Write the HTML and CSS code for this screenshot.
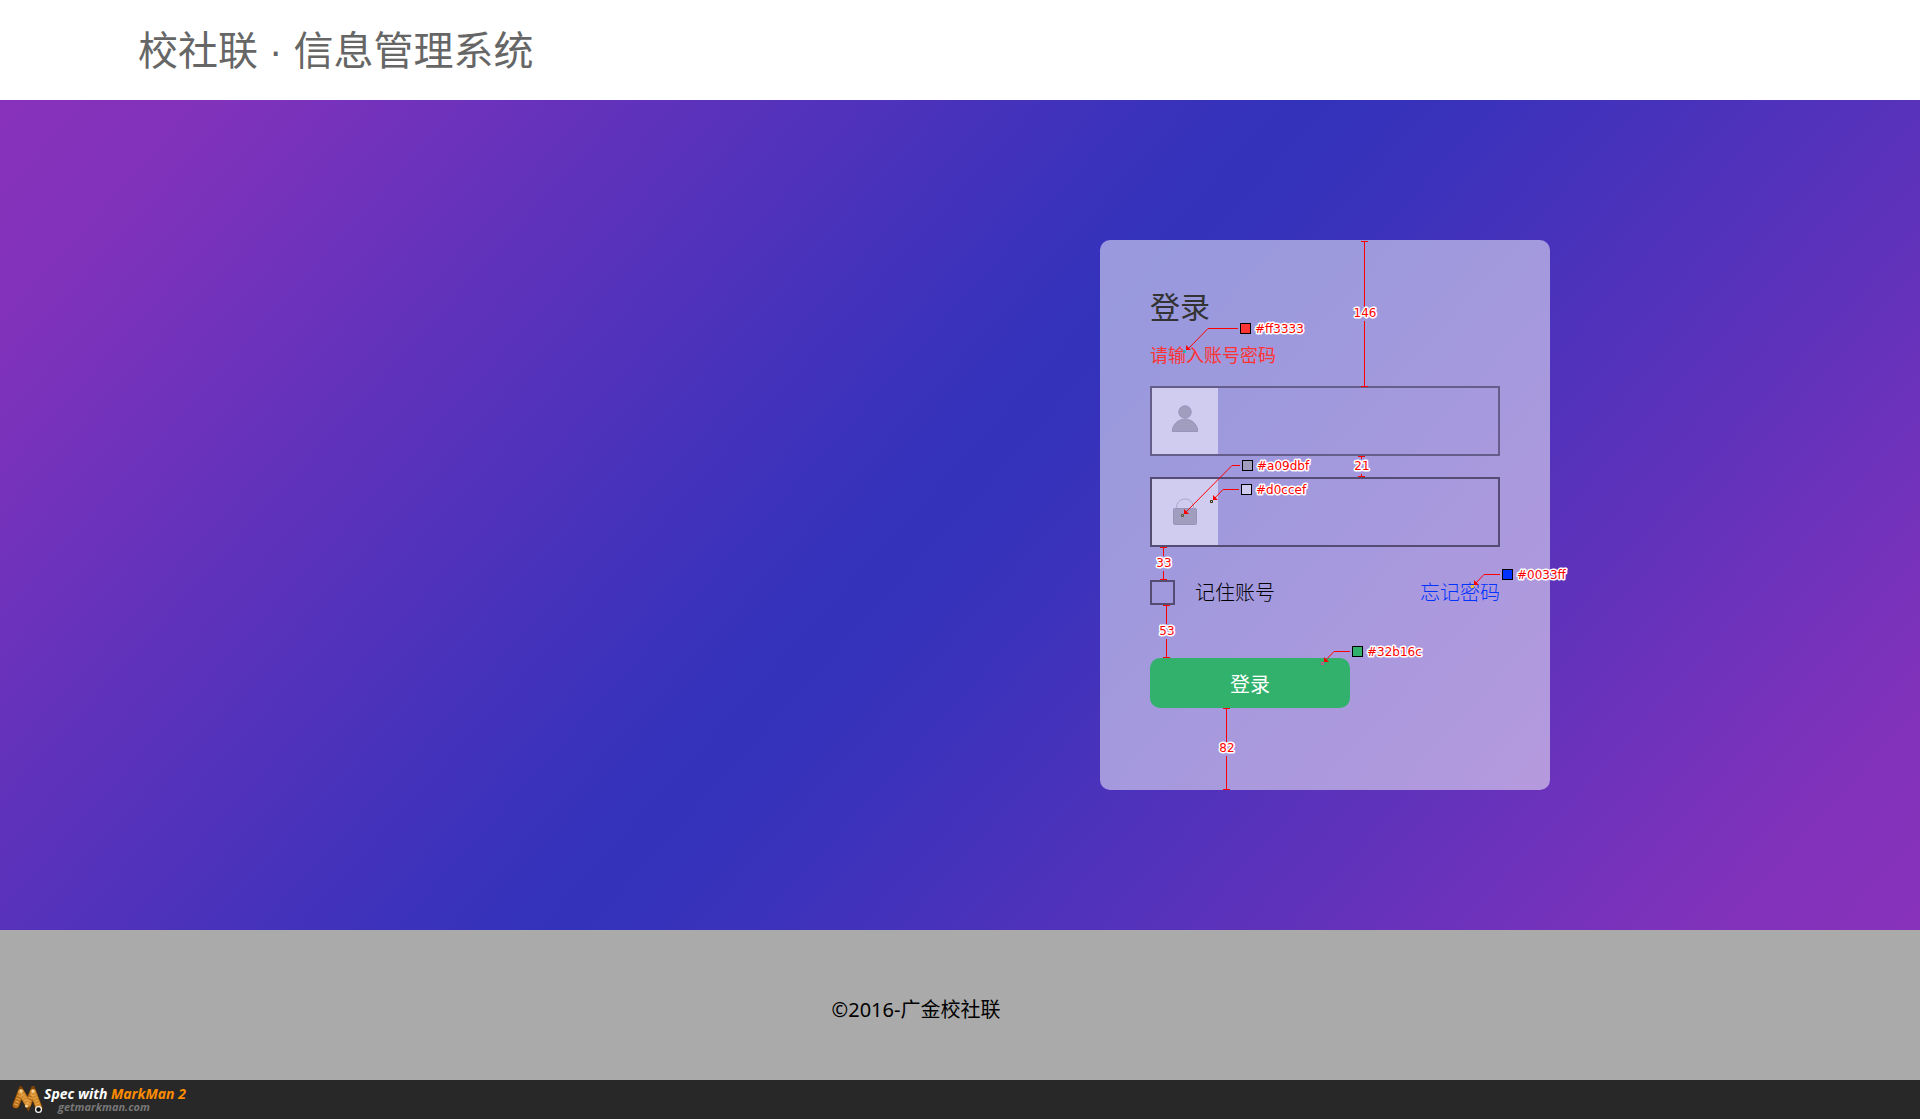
FILE: index.html
```html
<!DOCTYPE html>
<html lang="zh-CN">
<head>
<meta charset="utf-8">
<title>校社联 · 信息管理系统</title>
<link rel="stylesheet" href="styles.css">
</head>
<body>
<header class="header">
  <h1 class="header-title">校社联 · 信息管理系统</h1>
</header>

<main class="hero">
  <form class="card">
    <h2 class="card-title">登录</h2>
    <p class="card-error">请输入账号密码</p>

    <div class="field">
      <label class="field-icon" for="account" aria-label="账号">
        <svg width="28" height="28" viewBox="0 0 28 28" fill="#a09dbf" stroke="#9793ba">
          <circle cx="14" cy="7" r="6.2"/>
          <path d="M1.300 26.500C1.300 19.500 7 14.200 14 14.200S26.700 19.500 26.700 26.500Z"/>
        </svg>
      </label>
      <input class="field-input" id="account" type="text">
    </div>

    <div class="field field-dark">
      <label class="field-icon" for="password" aria-label="密码">
        <svg width="28" height="28" viewBox="0 0 28 28" fill="#a09dbf" stroke="#9793ba">
          <path d="M5.500 11V9.500C5.500 4.500 9.500 1 14 1S22.500 4.500 22.500 9.500V11" fill="none" stroke="#a9a6c9"/>
          <rect x="2.500" y="10.500" width="23" height="16" rx="1"/>
        </svg>
      </label>
      <input class="field-input" id="password" type="password">
    </div>

    <div class="options">
      <input class="remember-box" id="remember" type="checkbox">
      <label class="remember-label" for="remember">记住账号</label>
      <a class="forgot" href="#">忘记密码</a>
    </div>

    <button class="submit" type="submit">登录</button>

    <svg class="marks" width="500" height="550" viewBox="1100 240 500 550">
      <!-- spacing measurements -->
      <g class="mark-line">
        <path d="M1364.500 241V307M1364.500 321V386M1361 241.500h7M1361 386.500h7"/>
        <path d="M1361.500 456V459M1361.500 474V477M1358 456.500h7M1358 476.500h7"/>
        <path d="M1163.500 547V556M1163.500 571V580M1160 547.500h7M1160 579.500h7"/>
        <path d="M1166.500 605V624M1166.500 639V658M1163 605.500h7M1163 657.500h7"/>
        <path d="M1226.500 708V742M1226.500 756V790M1223 708.500h7M1223 789.500h7"/>
      </g>
      <!-- colour callouts -->
      <g class="mark-leader">
        <path d="M1238 328.500H1208L1187 350"/>
        <path d="M1240 465.500H1232L1184 514"/>
        <path d="M1239 489.500H1223L1213 500"/>
        <path d="M1500 574.500H1484L1474 585"/>
        <path d="M1350 651.500H1334L1324 662"/>
      </g>
      <g fill="#f00">
        <path d="M1186 345v5h5z"/><path d="M1184 509v5h5z"/><path d="M1213 495v5h5z"/>
        <path d="M1474 580v5h5z"/><path d="M1324 657v5h5z"/>
      </g>
      <g fill="none">
        <path d="M1183.500 350.500h2v2h-2z" stroke="#00c8c8"/>
        <path d="M1181.500 514.500h2v2h-2z" stroke="#5a5a32"/>
        <path d="M1210.500 500.500h2v2h-2z" stroke="#32320a"/>
        <path d="M1471.500 585.500h2v2h-2z" stroke="#ffcc00"/>
        <path d="M1321.500 662.500h2v2h-2z" stroke="#cd4e93"/>
      </g>
      <g stroke="#000">
        <rect x="1240.500" y="323.500" width="10" height="10" fill="#ff3333"/>
        <rect x="1242.500" y="460.500" width="10" height="10" fill="#a09dbf"/>
        <rect x="1241.500" y="484.500" width="10" height="10" fill="#d0ccef"/>
        <rect x="1502.500" y="569.500" width="10" height="10" fill="#0033ff"/>
        <rect x="1352.500" y="646.500" width="10" height="10" fill="#32b16c"/>
      </g>
      <g class="mark-text">
        <text x="1255" y="333">#ff3333</text>
        <text x="1257" y="470">#a09dbf</text>
        <text x="1256" y="494">#d0ccef</text>
        <text x="1517" y="579">#0033ff</text>
        <text x="1367" y="656">#32b16c</text>
      </g>
      <g class="mark-text" text-anchor="middle">
        <text x="1365" y="317">146</text>
        <text x="1362" y="470">21</text>
        <text x="1164" y="567">33</text>
        <text x="1167" y="635">53</text>
        <text x="1227" y="752">82</text>
      </g>
    </svg>
  </form>
</main>

<footer class="footer">
  <p class="footer-text">©2016-广金校社联</p>
</footer>

<div class="spec">
  <svg width="32" height="28" viewBox="0 0 32 28" fill="none" stroke-linecap="round">
    <path d="M4 19L9 6L16 18L21 6L27 22" stroke="#7c4308" stroke-width="7"/>
    <path d="M4 19L9 6M16 18L21 6" stroke="#b96f1a" stroke-width="6"/>
    <path d="M9 6L16 18M21 6L27 22" stroke="#d08a2c" stroke-width="6"/>
    <path d="M4 19L9 6M9 6L16 18M16 18L21 6M21 6L27 22" stroke="#e8a850" stroke-width="4" stroke-linecap="butt" stroke-dasharray="1 2"/>
    <g fill="#f5d9a0"><circle cx="9" cy="5" r="1.500"/><circle cx="21" cy="5" r="1.500"/><circle cx="14.500" cy="20" r="1.500"/></g>
    <circle cx="26.500" cy="23.500" r="3.500" fill="#f4f4f4"/><circle cx="26.500" cy="23.500" r="2.200" fill="#111"/>
  </svg>
  <div class="spec-text">
    <p class="spec-name">Spec with <span class="spec-brand">MarkMan 2</span></p>
    <p class="spec-site">getmarkman.com</p>
  </div>
</div>
</body>
</html>
```
FILE: styles.css
```css
* { box-sizing: border-box; }

body {
  margin: 0;
  min-height: 100vh;
  display: flex;
  flex-direction: column;
  font-family: "Open Sans", "Noto Sans CJK SC", sans-serif;
  background: #282828;
}

h1, h2, p { margin: 0; font-weight: 400; }

.header {
  height: 100px;
  padding: 0 138px;
  display: flex;
  align-items: center;
  background: #fff;
}

.header-title {
  font-family: "Liberation Sans", "Noto Sans CJK SC", sans-serif;
  font-size: 40px;
  line-height: 60px;
  padding-top: 2px;
  color: #666;
}

.hero {
  padding: 140px 370px;
  display: flex;
  justify-content: flex-end;
  background: linear-gradient(132deg, #8832bb, #8132bb 8%, #5e32bb 25%, #3b32bb 43%, #3332bb 49%, #3b32bb 56%, #5e32bb 75%, #8132bb 92%, #8832bb);
}

.card {
  position: relative;
  width: 450px;
  padding: 47px 50px 82px;
  border-radius: 10px;
  background: rgba(255, 255, 255, 0.5);
}

.card-title {
  font-size: 30px;
  line-height: 40px;
  color: #333;
}

.card-error {
  margin: 14px 0 17px;
  font-size: 18px;
  line-height: 28px;
  color: #f33;
}

.field {
  display: flex;
  height: 70px;
  margin-bottom: 21px;
  border: 2px solid #655e8b;
}

.field-dark { border-color: #544c72; }

.field-icon {
  width: 66px;
  display: flex;
  align-items: center;
  justify-content: center;
  padding-bottom: 4px;
  background: #d0ccef;
}

.field-dark .field-icon { padding-bottom: 0; }

.field-input {
  flex: 1;
  min-width: 0;
  padding: 0 12px;
  border: 0;
  background: transparent;
  font: inherit;
  font-size: 20px;
}

.options {
  display: flex;
  align-items: center;
  height: 25px;
  margin: 33px 0 53px;
  font-size: 20px;
  font-weight: 300;
  line-height: 25px;
}

.remember-box {
  appearance: none;
  width: 25px;
  height: 25px;
  margin: 0 20px 0 0;
  border: 2px solid #544c72;
}

.remember-label { color: #000; }

.forgot {
  margin-left: auto;
  color: #03f;
  text-decoration: none;
}

.submit {
  display: block;
  width: 200px;
  height: 50px;
  padding: 0;
  border: 0;
  border-radius: 10px;
  background: #32b16c;
  color: #fff;
  font: inherit;
  font-size: 20px;
}

/* design annotations laid over the card */
.marks {
  position: absolute;
  top: 0;
  left: 0;
  overflow: visible;
  pointer-events: none;
}

.mark-line { stroke: #f00; fill: none; shape-rendering: crispEdges; }

.mark-leader { stroke: #f00; fill: none; }

.mark-text {
  font: 12px "DejaVu Sans", sans-serif;
  fill: #f00;
  stroke: #fff;
  stroke-width: 3px;
  stroke-linejoin: round;
  paint-order: stroke;
}

.footer {
  height: 150px;
  padding: 10px 88px 0 0;
  display: flex;
  align-items: center;
  justify-content: center;
  background: #aaa;
}

.footer-text {
  font-family: "Noto Sans", "Noto Sans CJK SC", sans-serif;
  font-size: 20px;
  line-height: 28px;
}

.spec {
  height: 39px;
  padding: 0 12px;
  display: flex;
  align-items: center;
  background: #282828;
}

.spec-text {
  font-family: "Open Sans", sans-serif;
  font-style: italic;
}

.spec-name,
.spec-site { font-weight: 700; }

.spec-name { font-size: 14px; line-height: 14px; color: #fff; }

.spec-brand { color: #ff8c00; }

.spec-site { font-size: 11px; line-height: 12px; padding-left: 14px; color: #777; }
```
